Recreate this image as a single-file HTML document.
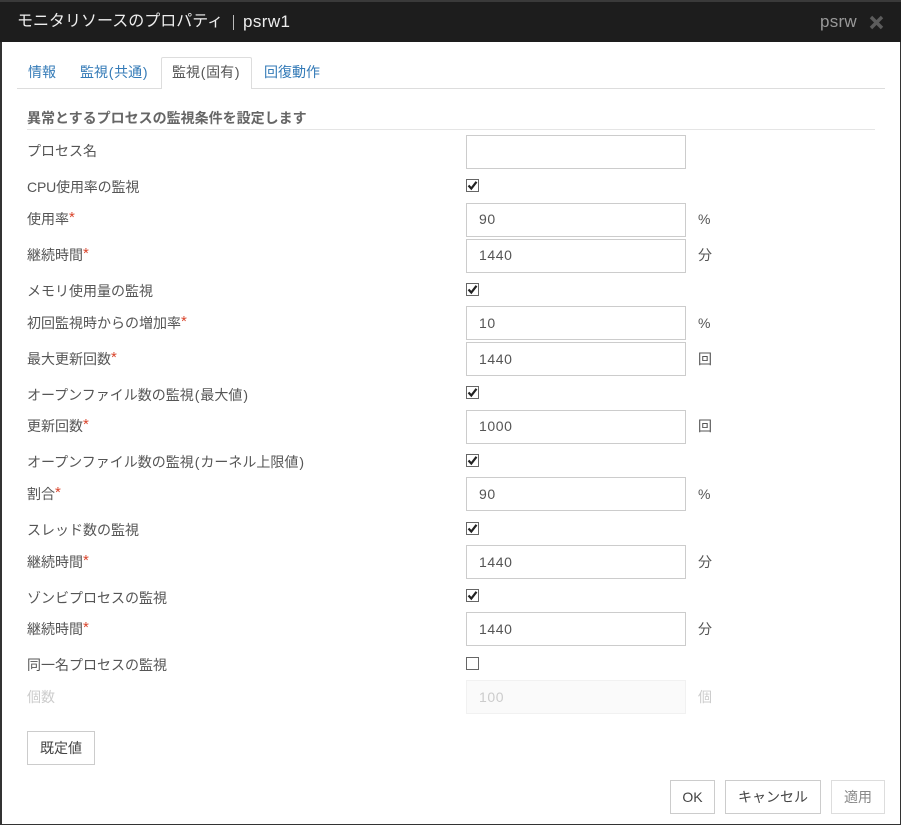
<!DOCTYPE html>
<html lang="ja">
<head>
<meta charset="utf-8">
<title>モニタリソースのプロパティ</title>
<style>
html,body{margin:0;padding:0;width:901px;height:825px;overflow:hidden;background:#fff}
body{position:relative;font-family:"Liberation Sans","Noto Sans CJK JP",sans-serif;font-size:14px;color:#555}
.a{position:absolute;white-space:nowrap}
.l{position:absolute;left:27px;height:20px;line-height:20px;white-space:nowrap;color:#555;font-size:14px}
.l i{font-style:normal;color:#d9442b;font-size:15px;position:relative;top:-2px;line-height:1}
.p{padding:0 1px}
.t{padding:0 .75px}
.i{position:absolute;left:466px;width:220px;height:34px;box-sizing:border-box;border:1px solid #ccc;line-height:31px;padding-left:12px;font-size:14px;color:#555;letter-spacing:.6px;background:#fff}
.d{line-height:33px}
.u{position:absolute;left:698px;height:20px;line-height:20px;font-size:14px;color:#555}
.c{position:absolute;left:466px;width:13px;height:13px;box-sizing:border-box;border:1px solid #666;background:#fff}
.c svg{position:absolute;left:0;top:0}
.b{position:absolute;box-sizing:border-box;border:1px solid #ccc;height:34px;line-height:32px;text-align:center;font-size:14px;color:#444;background:#fff}
</style>
</head>
<body>
<div class="a" style="left:0;top:0;width:901px;height:42px;background:#1d1d1d;border-top:2px solid #3a3a3a;box-sizing:border-box"></div>
<div class="a" style="left:0;top:42px;width:2px;height:783px;background:#333"></div>
<div class="a" style="left:900px;top:42px;width:1px;height:783px;background:#333"></div>
<div class="a" style="left:0;top:824px;width:901px;height:1px;background:#333"></div>

<div class="a" style="left:17px;top:9px;height:26px;line-height:26px;font-size:16px;color:#eee">モニタリソースのプロパティ</div>
<div class="a" style="left:233px;top:15px;width:1px;height:15px;background:#bbb"></div>
<div class="a" style="left:243px;top:9px;height:26px;line-height:26px;font-size:17px;letter-spacing:.4px;color:#eee">psrw1</div>
<div class="a" style="left:820px;top:10px;height:24px;line-height:24px;font-size:17px;letter-spacing:.25px;color:#999">psrw</div>
<svg class="a" style="left:869px;top:15px" width="15" height="15" viewBox="0 0 15 15"><path d="M2 2L13 13M13 2L2 13" stroke="#5c5c5c" stroke-width="3.4" fill="none"/></svg>

<div class="a" style="left:17px;top:88px;width:868px;height:1px;background:#ddd"></div>
<div class="a" style="left:161px;top:57px;width:91px;height:32px;box-sizing:border-box;border:1px solid #ddd;border-bottom:none;background:#fff;border-radius:2px 2px 0 0"></div>
<div class="a" style="left:28px;top:62px;height:20px;line-height:20px;color:#337ab7">情報</div>
<div class="a" style="left:80px;top:62px;height:20px;line-height:20px;color:#337ab7">監視<span class="t">(</span>共通<span class="t">)</span></div>
<div class="a" style="left:172px;top:62px;height:20px;line-height:20px;color:#555">監視<span class="t">(</span>固有<span class="t">)</span></div>
<div class="a" style="left:264px;top:62px;height:20px;line-height:20px;color:#337ab7">回復動作</div>

<div class="a" style="left:27px;top:108px;height:20px;line-height:20px;font-weight:bold;font-size:14px;color:#666">異常とするプロセスの監視条件を設定します</div>
<div class="a" style="left:27px;top:129px;width:848px;height:1px;background:#e5e5e5"></div>

<div class="l" style="top:141px">プロセス名</div>
<div class="i" style="top:135px"></div>

<div class="l" style="top:177px;letter-spacing:-.15px">CPU使用率の監視</div>
<div class="c" style="top:179px"><svg width="11" height="11" viewBox="0 0 11 11"><path d="M1.5 5.5L4.3 8.5L9.5 1.8" stroke="#222" stroke-width="2.2" fill="none"/></svg></div>

<div class="l" style="top:209px">使用率<i>*</i></div>
<div class="i" style="top:203px">90</div><div class="u" style="top:209px">%</div>

<div class="l" style="top:245px">継続時間<i>*</i></div>
<div class="i" style="top:239px">1440</div><div class="u" style="top:245px">分</div>

<div class="l" style="top:281px">メモリ使用量の監視</div>
<div class="c" style="top:283px"><svg width="11" height="11" viewBox="0 0 11 11"><path d="M1.5 5.5L4.3 8.5L9.5 1.8" stroke="#222" stroke-width="2.2" fill="none"/></svg></div>

<div class="l" style="top:313px">初回監視時からの増加率<i>*</i></div>
<div class="i d" style="top:306px">10</div><div class="u" style="top:313px">%</div>

<div class="l" style="top:349px">最大更新回数<i>*</i></div>
<div class="i d" style="top:342px">1440</div><div class="u" style="top:349px">回</div>

<div class="l" style="top:385px">オープンファイル数の監視<span class="p">(</span>最大値<span class="p">)</span></div>
<div class="c" style="top:386px"><svg width="11" height="11" viewBox="0 0 11 11"><path d="M1.5 5.5L4.3 8.5L9.5 1.8" stroke="#222" stroke-width="2.2" fill="none"/></svg></div>

<div class="l" style="top:416px">更新回数<i>*</i></div>
<div class="i" style="top:410px">1000</div><div class="u" style="top:416px">回</div>

<div class="l" style="top:452px">オープンファイル数の監視<span class="p">(</span>カーネル上限値<span class="p">)</span></div>
<div class="c" style="top:454px"><svg width="11" height="11" viewBox="0 0 11 11"><path d="M1.5 5.5L4.3 8.5L9.5 1.8" stroke="#222" stroke-width="2.2" fill="none"/></svg></div>

<div class="l" style="top:484px">割合<i>*</i></div>
<div class="i d" style="top:477px">90</div><div class="u" style="top:484px">%</div>

<div class="l" style="top:520px">スレッド数の監視</div>
<div class="c" style="top:522px"><svg width="11" height="11" viewBox="0 0 11 11"><path d="M1.5 5.5L4.3 8.5L9.5 1.8" stroke="#222" stroke-width="2.2" fill="none"/></svg></div>

<div class="l" style="top:552px">継続時間<i>*</i></div>
<div class="i d" style="top:545px">1440</div><div class="u" style="top:552px">分</div>

<div class="l" style="top:588px">ゾンビプロセスの監視</div>
<div class="c" style="top:589px"><svg width="11" height="11" viewBox="0 0 11 11"><path d="M1.5 5.5L4.3 8.5L9.5 1.8" stroke="#222" stroke-width="2.2" fill="none"/></svg></div>

<div class="l" style="top:619px">継続時間<i>*</i></div>
<div class="i d" style="top:612px">1440</div><div class="u" style="top:619px">分</div>

<div class="l" style="top:655px">同一名プロセスの監視</div>
<div class="c" style="top:657px"></div>

<div class="l" style="top:687px;color:#ccc">個数</div>
<div class="i d" style="top:680px;background:#fafafa;border-color:#f1f1f1;color:#ccc">100</div><div class="u" style="top:687px;color:#ccc">個</div>

<div class="b" style="left:27px;top:731px;width:68px">既定値</div>
<div class="b" style="left:670px;top:780px;width:45px">OK</div>
<div class="b" style="left:725px;top:780px;width:96px">キャンセル</div>
<div class="b" style="left:831px;top:780px;width:54px;color:#888;border-color:#ddd">適用</div>
</body>
</html>
